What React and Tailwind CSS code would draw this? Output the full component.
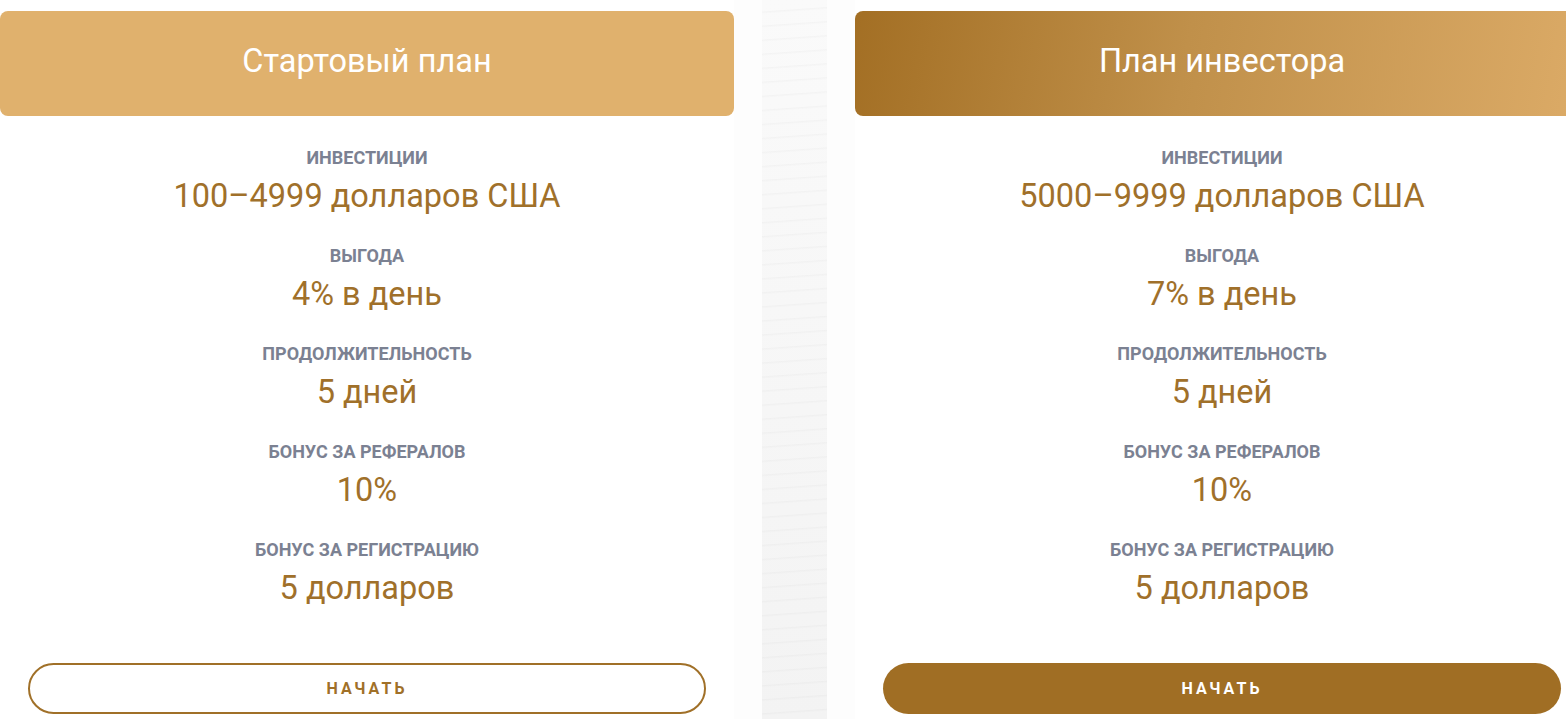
const plans = [
  {
    title: 'Стартовый план',
    headerClass: 'bg-[#e0b16d]',
    filled: false,
    rows: [
      ['Инвестиции', '100–4999 долларов США'],
      ['Выгода', '4% в день'],
      ['Продолжительность', '5 дней'],
      ['Бонус за рефералов', '10%'],
      ['Бонус за регистрацию', '5 долларов'],
    ],
  },
  {
    title: 'План инвестора',
    headerClass: 'bg-[linear-gradient(100deg,#a36f24_0%,#c0904a_45%,#dcab67_100%)]',
    filled: true,
    rows: [
      ['Инвестиции', '5000–9999 долларов США'],
      ['Выгода', '7% в день'],
      ['Продолжительность', '5 дней'],
      ['Бонус за рефералов', '10%'],
      ['Бонус за регистрацию', '5 долларов'],
    ],
  },
];

const PlanCard = ({ plan }) => (
  <div className="w-[734px] shrink-0 bg-white pt-[11px]">
    <div className={`h-[105px] rounded-lg flex items-center justify-center pb-[5px] ${plan.headerClass}`}>
      <h2 className="text-[32.5px] text-white font-normal leading-none">{plan.title}</h2>
    </div>

    <div className="pt-[32px] flex flex-col items-center">
      {plan.rows.map(([label, value]) => (
        <div key={label} className="flex flex-col items-center mb-[30px] last:mb-0">
          <div className="h-[20px] leading-[20px] text-[18px] font-bold uppercase text-[#7b8192]">
            {label}
          </div>
          <div className="mt-2 h-[40px] leading-[40px] text-[32.5px] text-[#a0702a]">
            {value}
          </div>
        </div>
      ))}
    </div>

    <div className="px-[28px] mt-[55px]">
      {plan.filled ? (
        <button className="w-full h-[51px] rounded-full bg-[#a06e24] text-white text-[16px] font-bold uppercase tracking-[3px]">
          Начать
        </button>
      ) : (
        <button className="w-full h-[51px] rounded-full border-2 border-[#a07028] bg-white text-[#a07028] text-[16px] font-bold uppercase tracking-[3px]">
          Начать
        </button>
      )}
    </div>
  </div>
);

export default function App() {
  return (
    <div className="w-[1566px] h-[719px] overflow-hidden bg-white flex font-['Roboto',sans-serif]">
      <PlanCard plan={plans[0]} />

      {/* divider strip between cards */}
      <div className="w-[121px] shrink-0 px-[28px] h-full bg-[#fdfdfd]">
        <div className="w-full h-full bg-gradient-to-b from-[#fafafa] to-[#f3f3f3]">
          <div className="w-full h-full bg-[repeating-linear-gradient(176deg,transparent_0px,transparent_11px,rgba(0,0,0,0.025)_12px,transparent_14px)]" />
        </div>
      </div>

      <PlanCard plan={plans[1]} />
    </div>
  );
}
